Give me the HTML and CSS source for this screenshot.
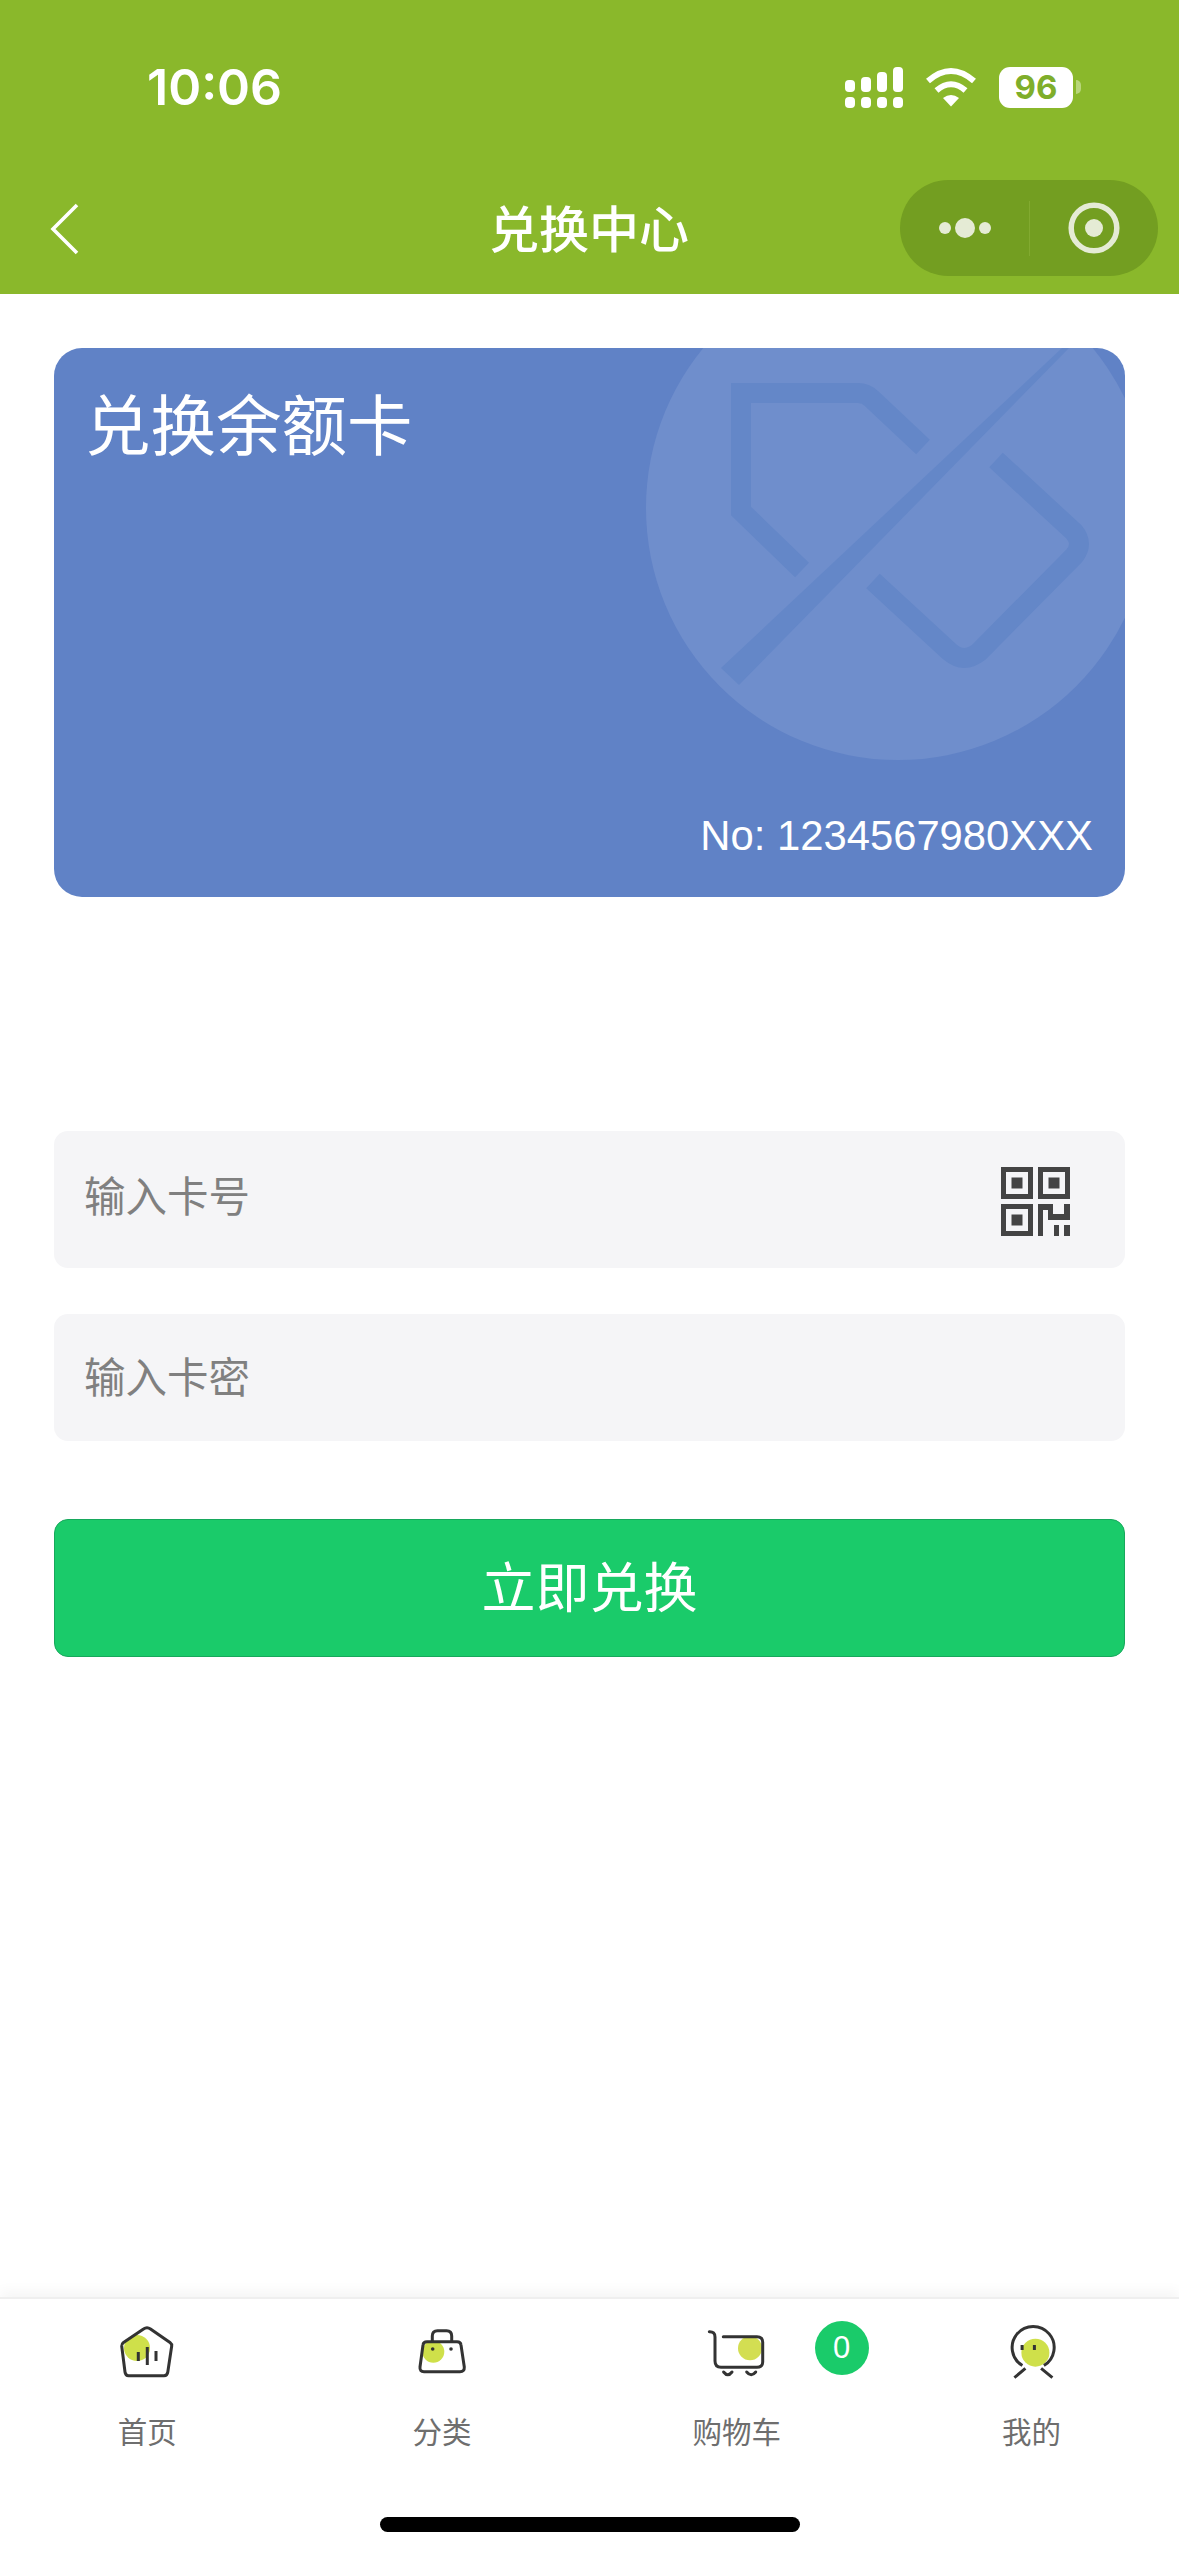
FILE: index.html
```html
<!DOCTYPE html>
<html lang="zh-CN">
<head>
<meta charset="utf-8">
<title>兑换中心</title>
<link rel="stylesheet" href="styles.css">
</head>
<body>
<div class="page">
  <header class="header">
    <div class="status">
      <span class="time">10:06</span>
      <div class="status-icons">
        <svg class="signal" width="58" height="41" viewBox="0 0 58 41" fill="#fff">
          <rect x="0" y="13" width="10" height="12" rx="4"/><rect x="16" y="10" width="10" height="15" rx="4"/><rect x="32" y="5" width="10" height="20" rx="4"/><rect x="48" y="0" width="10" height="25" rx="4"/>
          <rect x="0" y="30" width="10" height="11" rx="4"/><rect x="16" y="30" width="10" height="11" rx="4"/><rect x="32" y="30" width="10" height="11" rx="4"/><rect x="48" y="30" width="10" height="11" rx="4"/>
        </svg>
        <svg class="wifi" width="52" height="40" viewBox="0 0 52 40" fill="none" stroke="#fff" stroke-width="6">
          <path d="M3 14Q26 -6 49 14"/><path d="M11.500 23.500Q26 11 40.500 23.500"/><path d="M18 31Q26 25 34 31L26 39.500Z" fill="#fff" stroke="none"/>
        </svg>
        <div class="battery"><span class="battery-body">96</span><span class="battery-nub"></span></div>
      </div>
    </div>
    <nav class="nav">
      <svg class="back" width="30" height="52" viewBox="0 0 30 52" fill="none" stroke="#fff" stroke-width="3.600"><path d="M27 2 3 26 27 50"/></svg>
      <h1 class="title">兑换中心</h1>
      <div class="capsule">
        <div class="capsule-part"><span class="dot"></span><span class="dot dot-big"></span><span class="dot"></span></div>
        <div class="capsule-part capsule-right">
          <svg width="52" height="52" viewBox="0 0 52 52"><circle cx="26" cy="26" r="22.800" fill="none" stroke="#e5ebd5" stroke-width="5.500"/><circle cx="26" cy="26" r="9" fill="#e5ebd5"/></svg>
        </div>
      </div>
    </nav>
  </header>

  <main class="main">
    <section class="card">
      <svg class="card-art" width="1071" height="549" viewBox="54 348 1071 549">
        <circle cx="898" cy="508" r="252" fill="#6F8ECC"/>
        <g fill="none" stroke="#6487C8" stroke-width="20">
          <path d="M802 570 741 511V393H858Q866 393 872 399L923 447"/>
          <path d="M996 460 1074 532Q1084 544 1074 556L979 652Q964 664 950 652L873 581"/>
        </g>
        <path d="M721 668 1062 348H1069L739 685Z" fill="#6487C8"/>
      </svg>
      <div class="card-name">兑换余额卡</div>
      <div class="card-no">No: 1234567980XXX</div>
    </section>

    <div class="field field-card">
      <span class="placeholder">输入卡号</span>
      <svg class="qr" width="69" height="69" viewBox="0 0 69 69" fill="#444">
        <path fill-rule="evenodd" d="M0 0H32V32H0ZM5 5V27H27V5Z"/><rect x="10.500" y="10.500" width="11" height="11"/>
        <path fill-rule="evenodd" d="M37 0H69V32H37ZM42 5V27H64V5Z"/><rect x="47.500" y="10.500" width="11" height="11"/>
        <path fill-rule="evenodd" d="M0 37H32V69H0ZM5 42V64H27V42Z"/><rect x="10.500" y="47.500" width="11" height="11"/>
        <path d="M37 37H52V47H63V37H69V53H47V43H42V69H37Z"/><rect x="53" y="58" width="5" height="11"/><rect x="63" y="58" width="6" height="11"/>
      </svg>
    </div>
    <div class="field field-pass">
      <span class="placeholder">输入卡密</span>
    </div>
    <button class="submit" type="button"><span class="submit-text">立即兑换</span></button>
  </main>

  <footer class="tabbar">
    <div class="tabs">
      <div class="tab">
        <svg class="tab-icon" width="60" height="60" viewBox="0 0 60 60" fill="none" stroke="#333" stroke-width="3" stroke-linejoin="round">
          <circle cx="20" cy="26" r="13" fill="#CFE04A" stroke="none"/>
          <path d="M26.500 7Q30 4.500 33.500 7L53 20.500Q55 22 54.700 24L50.800 50Q50.300 53.700 47 53.700H11.500Q8.500 53.700 8 50L4.700 24Q4.500 22 6.500 20.500Z"/>
          <path d="M21.300 30V39M30.300 25V43M39 29V39"/>
        </svg>
        <span class="tab-label">首页</span>
      </div>
      <div class="tab">
        <svg class="tab-icon" width="60" height="60" viewBox="0 0 60 60" fill="none" stroke="#333" stroke-width="3">
          <circle cx="21.300" cy="29.700" r="11" fill="#CFE04A" stroke="none"/>
          <path d="M15 19.700H45Q48.700 19.700 49 23L52.300 45Q52.600 49.700 48 49.700H12Q7.500 49.700 8 45L11 23Q11.300 19.700 15 19.700Z"/>
          <path d="M20.300 19.700V14Q20.300 8.700 25.500 8.700H34.500Q39.700 8.700 39.700 14V19.700"/>
          <circle cx="20.700" cy="27" r="1.800" fill="#333" stroke="none"/><circle cx="39" cy="27" r="1.800" fill="#333" stroke="none"/>
        </svg>
        <span class="tab-label">分类</span>
      </div>
      <div class="tab">
        <svg class="tab-icon" width="60" height="60" viewBox="0 0 60 60" fill="none" stroke="#333" stroke-width="3" stroke-linecap="round">
          <circle cx="43" cy="26.300" r="12" fill="#D3DE52" stroke="none"/>
          <path d="M2.300 9.700Q8 9.500 8 15V39Q8 45.300 14 45.300H50Q55.700 45.300 55.700 40V20Q55.700 14.700 50 14.700H16.300"/>
          <path d="M16.600 50Q20.800 55.500 25 50M39.700 50Q44.200 55.500 48.700 50"/>
        </svg>
        <span class="tab-label">购物车</span>
        <span class="badge">0</span>
      </div>
      <div class="tab">
        <svg class="tab-icon" width="60" height="60" viewBox="-1.400 0 60 60" fill="none" stroke="#333" stroke-width="3">
          <circle cx="32" cy="30.700" r="14" fill="#CFE04A" stroke="none"/>
          <path d="M19 43.500A21 21 0 1 1 40.500 43.500"/>
          <path d="M22 46.300 11 55.700M37.700 46.300 49 55.700M18.700 23V28M31 23V28"/>
        </svg>
        <span class="tab-label">我的</span>
      </div>
    </div>
    <div class="home-indicator"></div>
  </footer>
</div>
</body>
</html>
```
FILE: styles.css
```css
* {
  box-sizing: border-box;
}

html,
body {
  margin: 0;
  padding: 0;
  background: #fff;
}

body {
  font-family: "Noto Sans CJK SC", "Liberation Sans", sans-serif;
}

.page {
  width: 1179px;
  height: 2556px;
  display: flex;
  flex-direction: column;
  overflow: hidden;
}

.header {
  height: 294px;
  flex: none;
  background: #8ab82b;
  color: #fff;
}

.status {
  height: 180px;
  padding: 0 98px 6px 147px;
  display: flex;
  align-items: center;
  justify-content: space-between;
}

.time {
  font-family: Inter, "Liberation Sans", sans-serif;
  font-size: 50px;
  font-weight: 600;
  line-height: 1;
}

.status-icons {
  display: flex;
  align-items: center;
  gap: 22px;
}

.wifi {
  display: block;
}

.battery {
  display: flex;
  align-items: center;
  gap: 3px;
}

.battery-body {
  width: 74px;
  height: 41px;
  border-radius: 11px;
  background: #fff;
  color: #7fae2b;
  font-family: Inter, "Liberation Sans", sans-serif;
  font-size: 33px;
  font-weight: 700;
  line-height: 41px;
  text-align: center;
}

.battery-nub {
  width: 5px;
  height: 14px;
  border-radius: 0 7px 7px 0;
  background: #b8d67a;
}

.nav {
  height: 114px;
  display: grid;
  grid-template-columns: 1fr auto 1fr;
  align-items: start;
  padding: 0 21px 0 50px;
}

.back {
  margin-top: 23px;
  display: block;
}

.title {
  margin: 18px 0 0;
  font-size: 50px;
  font-weight: 500;
  line-height: 56px;
  transform: translateX(-15px);
}

.capsule {
  justify-self: end;
  width: 258px;
  height: 96px;
  border-radius: 48px;
  background: #739e21;
  display: flex;
  align-items: center;
}

.capsule-part {
  width: 129px;
  height: 55px;
  display: flex;
  align-items: center;
  justify-content: center;
  gap: 4px;
}

.capsule-right {
  border-left: 1px solid #82aa30;
}

.dot {
  width: 12px;
  height: 12px;
  border-radius: 50%;
  background: #e5ebd5;
}

.dot-big {
  width: 20px;
  height: 20px;
}

.main {
  flex: 1;
  padding: 54px 54px 0;
  display: flex;
  flex-direction: column;
}

.card {
  position: relative;
  height: 549px;
  border-radius: 28px;
  background: #6082c6;
  color: #fff;
  overflow: hidden;
  padding: 32px 32px 36px 31px;
  display: flex;
  flex-direction: column;
  justify-content: space-between;
}

.card-art {
  position: absolute;
  left: 0;
  top: 0;
}

.card-name {
  position: relative;
  font-size: 65.500px;
  font-weight: 400;
  line-height: 84px;
}

.card-no {
  position: relative;
  align-self: flex-end;
  font-family: "Liberation Sans", sans-serif;
  font-size: 41.800px;
  line-height: 50px;
}

.field {
  background: #f5f5f7;
  border-radius: 14px;
  display: flex;
  align-items: center;
  justify-content: space-between;
  padding: 0 55px 0 30px;
}

.field-card {
  height: 137px;
  margin-top: 234px;
}

.field-pass {
  height: 127px;
  margin-top: 46px;
}

.placeholder {
  font-size: 41.500px;
  color: #808080;
  line-height: 60px;
}

.field-card .placeholder {
  margin-top: -12px;
}

.field-pass .placeholder {
  margin-top: -6px;
}

.qr {
  display: block;
  margin-top: 4px;
}

.submit {
  height: 138px;
  margin-top: 78px;
  border: 1px solid #17a85c;
  border-radius: 14px;
  background: #1acb6a;
  color: #fff;
  font-family: inherit;
  font-size: 54px;
  line-height: 1;
  padding: 0 0 6px;
}

.tabbar {
  flex: none;
  height: 259px;
  background: #fff;
  border-top: 2px solid #efefef;
  box-shadow: 0 -6px 12px rgba(0, 0, 0, 0.04);
  position: relative;
  display: flex;
  flex-direction: column;
}

.tabs {
  display: grid;
  grid-template-columns: repeat(4, 1fr);
}

.tab {
  position: relative;
  display: flex;
  flex-direction: column;
  align-items: center;
  padding-top: 23px;
}

.tab-icon {
  display: block;
}

.tab-label {
  margin-top: 27px;
  font-size: 29.500px;
  line-height: 42px;
  color: #6e6e6e;
}

.badge {
  position: absolute;
  left: 225px;
  top: 22px;
  width: 54px;
  height: 54px;
  border-radius: 50%;
  background: #1acb6a;
  color: #fff;
  font-family: "Liberation Sans", sans-serif;
  font-size: 31px;
  line-height: 54px;
  text-align: center;
}

.home-indicator {
  position: absolute;
  left: 380px;
  top: 218px;
  width: 420px;
  height: 15px;
  border-radius: 8px;
  background: #000;
}
```
